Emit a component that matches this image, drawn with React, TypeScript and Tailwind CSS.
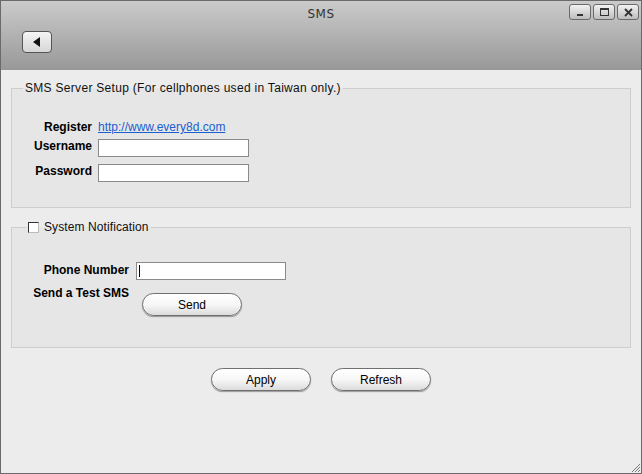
import React from 'react';

function PillButton({ label }: { label: string }) {
    return (
        <button
            type="button"
            className="w-[100px] h-[23px] rounded-full border border-[#6f6f6f] bg-gradient-to-b from-white via-[#f7f7f7] to-[#dcdcdc] shadow-[0_1px_1px_rgba(0,0,0,0.35)] text-[12px] leading-none text-black"
        >
            {label}
        </button>
    );
}

function WinButton({ children }: { children: React.ReactNode }) {
    return (
        <div className="w-[22px] h-[16px] rounded-[3px] border border-[#6a6a6a] bg-gradient-to-b from-[#f2f2f2] to-[#bdbdbd] flex items-center justify-center">
            {children}
        </div>
    );
}

function TextBox({ width, caret }: { width: string; caret?: boolean }) {
    return (
        <div className={`${width} h-[18px] bg-white border border-[#8a8a8a] flex items-center pl-[2px]`}>
            {caret && <div className="w-px h-[12px] bg-black" />}
        </div>
    );
}

export default function App() {
    return (
        <div className="w-[642px] h-[474px] flex flex-col border border-[#6a6a6a] font-['Liberation_Sans',Arial,sans-serif] text-[12px] text-black overflow-hidden">
            {/* ── Title bar ── */}
            <div className="h-[69px] flex-shrink-0 bg-gradient-to-b from-[#cbcbcb] to-[#989898] flex flex-col">
                <div className="grid grid-cols-[1fr_auto_1fr] pt-[3px] h-[20px]">
                    <div />
                    <div className="text-[12px] leading-[16px] text-[#333] pt-[2px] font-['DejaVu_Sans',sans-serif] tracking-[0.5px]">SMS</div>
                    <div className="flex justify-end gap-[2px] pr-[2px]">
                        <WinButton>
                            <div className="w-[6px] h-[2px] bg-[#333] mt-[6px]" />
                        </WinButton>
                        <WinButton>
                            <div className="w-[9px] h-[8px] border border-[#333] border-t-2" />
                        </WinButton>
                        <WinButton>
                            <svg width="9" height="9" viewBox="0 0 9 9">
                                <path d="M1 1 L8 8 M8 1 L1 8" stroke="#333" strokeWidth="1.8" />
                            </svg>
                        </WinButton>
                    </div>
                </div>
                <div className="pl-[21px] mt-[10px]">
                    <div className="w-[30px] h-[22px] rounded-[4px] border border-[#555] bg-gradient-to-b from-[#f5f5f5] to-[#d6d6d6] flex items-center justify-center">
                        <svg width="8" height="10" viewBox="0 0 8 10">
                            <path d="M7 0 L0 5 L7 10 Z" fill="#111" />
                        </svg>
                    </div>
                </div>
            </div>

            {/* ── Content ── */}
            <div className="flex-1 bg-[#ececec] flex flex-col px-[10px] pt-[11px]">
                <fieldset className="border border-[#cdcdcd] bg-[#e6e6e6]">
                    <legend className="ml-[11px] px-[2px] leading-[14px] text-[#111] tracking-[0.3px]">
                        SMS Server Setup (For cellphones used in Taiwan only.)
                    </legend>
                    <div className="pl-[21px] pt-[24px] pb-[25px]">
                        <div className="grid grid-cols-[59px_auto] gap-x-[6px] items-start">
                            <div className="h-[16px] leading-[16px] font-bold text-right">Register</div>
                            <div className="h-[16px] leading-[16px]">
                                <a className="text-[#1a5fd0] underline">http://www.every8d.com</a>
                            </div>

                            <div className="mt-[4px] leading-[14px] font-bold text-right">Username</div>
                            <div className="mt-[4px]">
                                <TextBox width="w-[151px]" />
                            </div>

                            <div className="mt-[7px] leading-[14px] font-bold text-right">Password</div>
                            <div className="mt-[7px]">
                                <TextBox width="w-[151px]" />
                            </div>
                        </div>
                    </div>
                </fieldset>

                <fieldset className="mt-[12px] border border-[#cdcdcd] bg-[#e6e6e6]">
                    <legend className="ml-[14px] px-[2px] leading-[14px] text-[#111]">
                        <span className="flex items-center gap-[5px]">
                            <span className="w-[11px] h-[11px] bg-white border border-t-[#333] border-l-[#333] border-r-[#bbb] border-b-[#bbb]" />
                            <span className="tracking-[0.1px]">System Notification</span>
                        </span>
                    </legend>
                    <div className="pl-[21px] pt-[28px] pb-[31px]">
                        <div className="grid grid-cols-[96px_auto] gap-x-[7px] items-start">
                            <div className="leading-[14px] pt-[1px] font-bold text-right">Phone Number</div>
                            <div>
                                <TextBox width="w-[150px]" caret />
                            </div>

                            <div className="mt-[6px] leading-[14px] font-bold text-right whitespace-nowrap">Send a Test SMS</div>
                            <div className="mt-[13px] ml-[6px]">
                                <PillButton label="Send" />
                            </div>
                        </div>
                    </div>
                </fieldset>

                <div className="mt-[20px] flex justify-center gap-[20px]">
                    <PillButton label="Apply" />
                    <PillButton label="Refresh" />
                </div>

                <div className="flex-1" />
                <div className="flex justify-end -mr-[10px]">
                    <svg width="11" height="11" viewBox="0 0 11 11">
                        <path d="M10 2 L2 10 M10 5 L5 10 M10 8 L8 10" stroke="#777" strokeWidth="1" />
                    </svg>
                </div>
            </div>
        </div>
    );
}
